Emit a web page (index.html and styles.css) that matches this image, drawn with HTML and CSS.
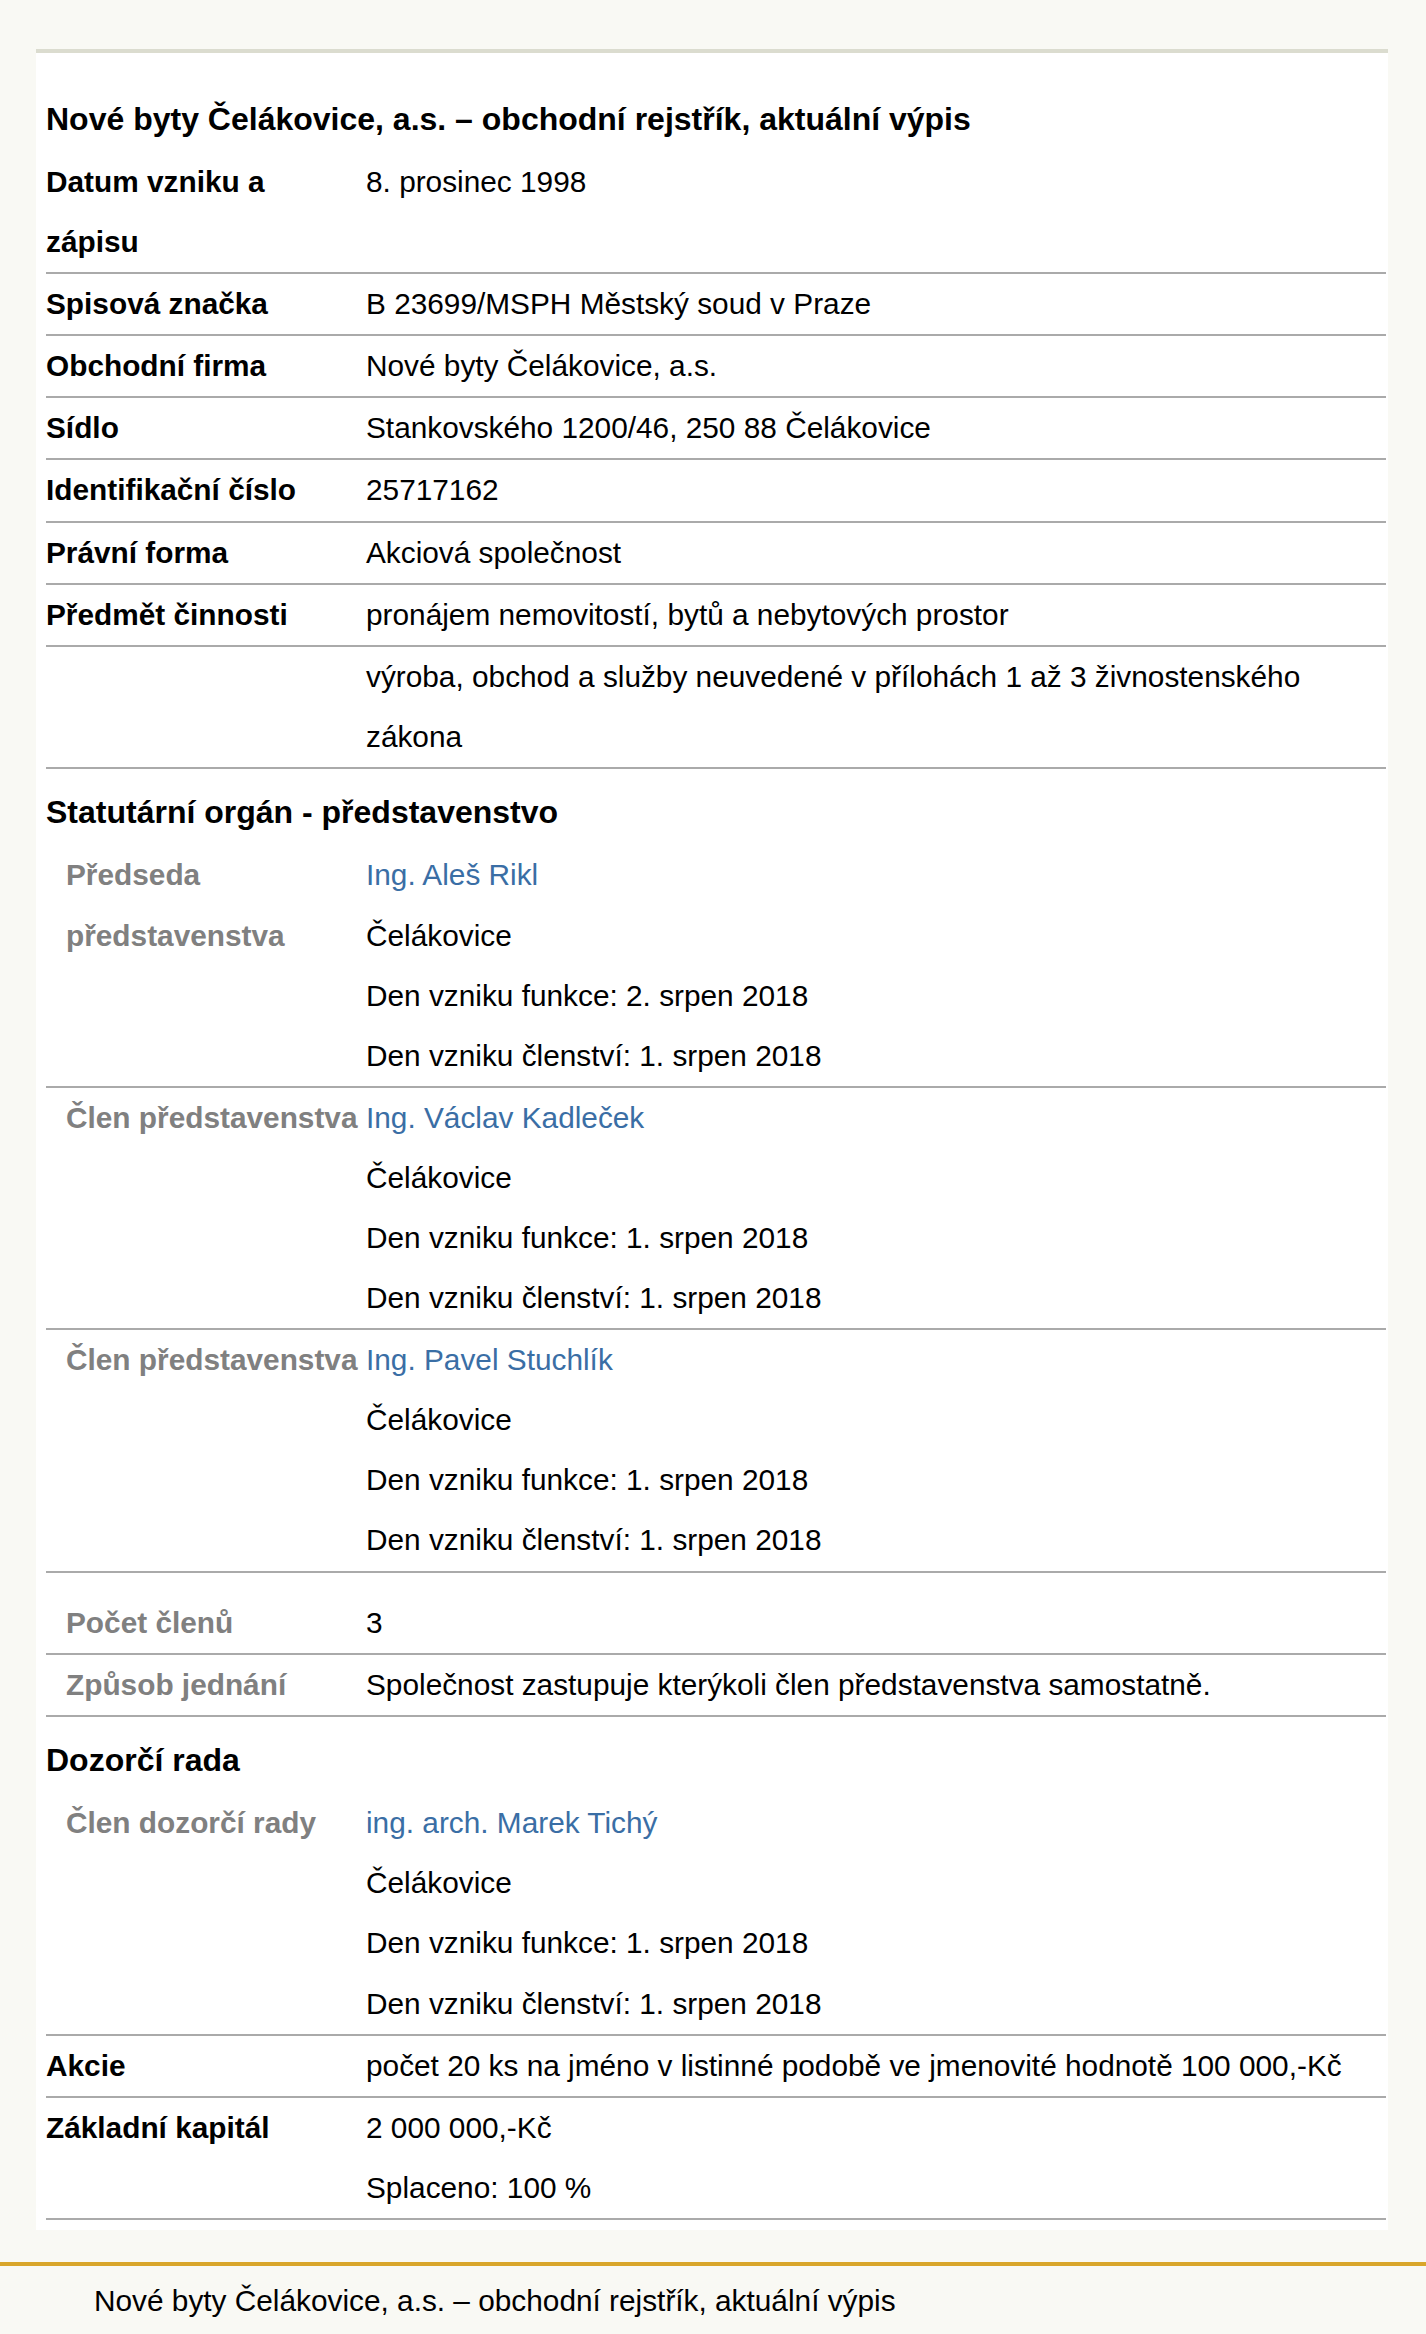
FILE: index.html
```html
<!DOCTYPE html>
<html lang="cs">
<head>
<meta charset="utf-8">
<title>Nové byty Čelákovice, a.s. – obchodní rejstřík, aktuální výpis</title>
<link rel="stylesheet" href="styles.css">
</head>
<body>
<div class="page">
  <div class="panel">
    <h1 class="heading">Nové byty Čelákovice, a.s. – obchodní rejstřík, aktuální výpis</h1>

    <div class="row"><div class="label">Datum vzniku a zápisu</div><div class="value"><div>8. prosinec 1998</div></div></div>
    <div class="row"><div class="label">Spisová značka</div><div class="value"><div>B 23699/MSPH Městský soud v Praze</div></div></div>
    <div class="row"><div class="label">Obchodní firma</div><div class="value"><div>Nové byty Čelákovice, a.s.</div></div></div>
    <div class="row"><div class="label">Sídlo</div><div class="value"><div>Stankovského 1200/46, 250 88 Čelákovice</div></div></div>
    <div class="row"><div class="label">Identifikační číslo</div><div class="value"><div>25717162</div></div></div>
    <div class="row"><div class="label">Právní forma</div><div class="value"><div>Akciová společnost</div></div></div>
    <div class="row"><div class="label">Předmět činnosti</div><div class="value"><div>pronájem nemovitostí, bytů a nebytových prostor</div></div></div>
    <div class="row"><div class="label"></div><div class="value"><div>výroba, obchod a služby neuvedené v přílohách 1 až 3 živnostenského zákona</div></div></div>

    <h2 class="heading">Statutární orgán - představenstvo</h2>

    <div class="row sub"><div class="label">Předseda představenstva</div><div class="value"><div><a class="link" href="#">Ing. Aleš Rikl</a></div><div>Čelákovice</div><div>Den vzniku funkce: 2. srpen 2018</div><div>Den vzniku členství: 1. srpen 2018</div></div></div>
    <div class="row sub"><div class="label">Člen představenstva</div><div class="value"><div><a class="link" href="#">Ing. Václav Kadleček</a></div><div>Čelákovice</div><div>Den vzniku funkce: 1. srpen 2018</div><div>Den vzniku členství: 1. srpen 2018</div></div></div>
    <div class="row sub"><div class="label">Člen představenstva</div><div class="value"><div><a class="link" href="#">Ing. Pavel Stuchlík</a></div><div>Čelákovice</div><div>Den vzniku funkce: 1. srpen 2018</div><div>Den vzniku členství: 1. srpen 2018</div></div></div>
    <div class="row sub spaced"><div class="label">Počet členů</div><div class="value"><div>3</div></div></div>
    <div class="row sub"><div class="label">Způsob jednání</div><div class="value"><div>Společnost zastupuje kterýkoli člen představenstva samostatně.</div></div></div>

    <h2 class="heading">Dozorčí rada</h2>

    <div class="row sub"><div class="label">Člen dozorčí rady</div><div class="value"><div><a class="link" href="#">ing. arch. Marek Tichý</a></div><div>Čelákovice</div><div>Den vzniku funkce: 1. srpen 2018</div><div>Den vzniku členství: 1. srpen 2018</div></div></div>

    <div class="row"><div class="label">Akcie</div><div class="value"><div>počet 20 ks na jméno v listinné podobě ve jmenovité hodnotě 100 000,-Kč</div></div></div>
    <div class="row"><div class="label">Základní kapitál</div><div class="value"><div>2 000 000,-Kč</div><div>Splaceno: 100 %</div></div></div>
  </div>
</div>
<footer class="footer">Nové byty Čelákovice, a.s. – obchodní rejstřík, aktuální výpis</footer>
</body>
</html>
```

FILE: styles.css
```css
html, body {
  margin: 0;
  padding: 0;
  background: #f9f9f4;
}

body {
  font-family: "Liberation Sans", Arial, sans-serif;
  font-size: 29.8px;
  line-height: 60.1px;
  color: #000;
}

.page {
  padding-top: 49px;
}

.panel {
  width: 1352px;
  margin-left: 36px;
  box-sizing: border-box;
  background: #fff;
  border-top: 4px solid #dbdccf;
  padding: 22.5px 2px 10px 10px;
}

.heading {
  margin: 0;
  padding: 13.5px 0 3px 0;
  font-size: 32px;
  line-height: 60px;
  font-weight: bold;
}

.row {
  display: grid;
  grid-template-columns: 320px 1fr;
  border-bottom: 2px solid #aaaaaa;
}

.label {
  font-weight: bold;
  padding-right: 6px;
}

.sub .label {
  color: #808080;
  padding-left: 20px;
}

.spaced {
  padding-top: 20px;
}

.link {
  color: #3a6ea5;
  text-decoration: none;
}

.footer {
  margin-top: 32px;
  border-top: 4px solid #d9a62a;
  padding: 5px 0 4px 94px;
}
```
